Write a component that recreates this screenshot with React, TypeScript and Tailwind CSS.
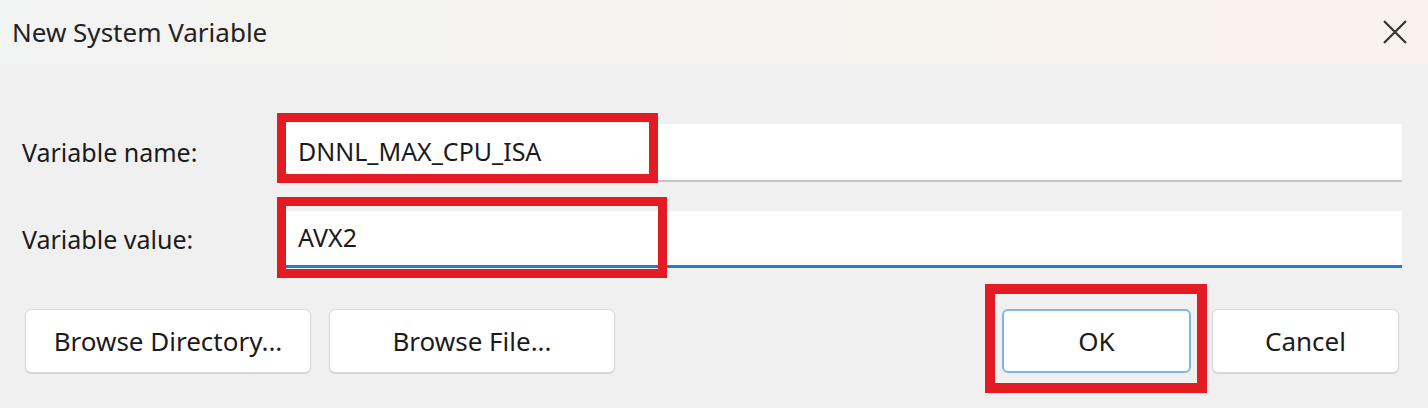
import React from "react";

const font = { fontFamily: '"Noto Sans", "Open Sans", sans-serif' };

function Btn({ label, w, primary }: { label: string; w: string; primary?: boolean }) {
  return (
    <div
      className={`${w} h-[64px] flex items-center justify-center rounded-[6px] bg-white text-[26px] text-[#1b1b1b] ${
        primary ? "border-2 border-[#7fb6e8]" : "border border-[#d9d9d9] shadow-[0_1px_1px_rgba(0,0,0,0.12)]"
      }`}
    >
      {label}
    </div>
  );
}

export default function App() {
  return (
    <div className="relative w-[1428px] h-[408px] bg-[#f0f0f0] overflow-hidden" style={font}>
      <div className="h-[64px] flex items-center justify-between pl-[12px] pr-[21px] bg-gradient-to-r from-[#f2f3f3] via-[#f5f3f0] to-[#faf2ea]">
        <span className="text-[26px] text-[#222]">New System Variable</span>
        <svg width="24" height="24" viewBox="0 0 24 24" className="text-[#333]">
          <path d="M1 1 L23 23 M23 1 L1 23" stroke="currentColor" strokeWidth="2.2" fill="none" />
        </svg>
      </div>

      <div className="pl-[22px] pr-[26px] pt-[60px]">
        <div className="flex items-center h-[58px]">
          <div className="w-[258px] text-[25px] text-[#1b1b1b]">Variable name:</div>
          <div className="flex-1 h-[58px] bg-white border-b-2 border-[#c4c4c4] flex items-center pl-[18px] text-[25px] text-[#1b1b1b]">
            DNNL_MAX_CPU_ISA
          </div>
        </div>
        <div className="flex items-center h-[57px] mt-[29px]">
          <div className="w-[258px] text-[25px] text-[#1b1b1b]">Variable value:</div>
          <div className="flex-1 h-[57px] bg-white border-b-[3px] border-[#2b78d0] flex items-center pl-[18px] text-[25px] text-[#1b1b1b]">
            AVX2
          </div>
        </div>
      </div>

      <div className="flex items-center pl-[25px] pr-[29px] mt-[41px]">
        <div className="flex gap-[18px]">
          <Btn label="Browse Directory..." w="w-[286px]" />
          <Btn label="Browse File..." w="w-[286px]" />
        </div>
        <div className="ml-auto flex gap-[21px]">
          <Btn label="OK" w="w-[189px]" primary />
          <Btn label="Cancel" w="w-[187px]" />
        </div>
      </div>

      <div className="absolute left-[277px] top-[113px] w-[381px] h-[70px] border-[9px] border-[#e31b23]" />
      <div className="absolute left-[277px] top-[197px] w-[390px] h-[81px] border-[9px] border-[#e31b23]" />
      <div className="absolute left-[985px] top-[284px] w-[222px] h-[109px] border-[10px] border-[#e31b23]" />
    </div>
  );
}
